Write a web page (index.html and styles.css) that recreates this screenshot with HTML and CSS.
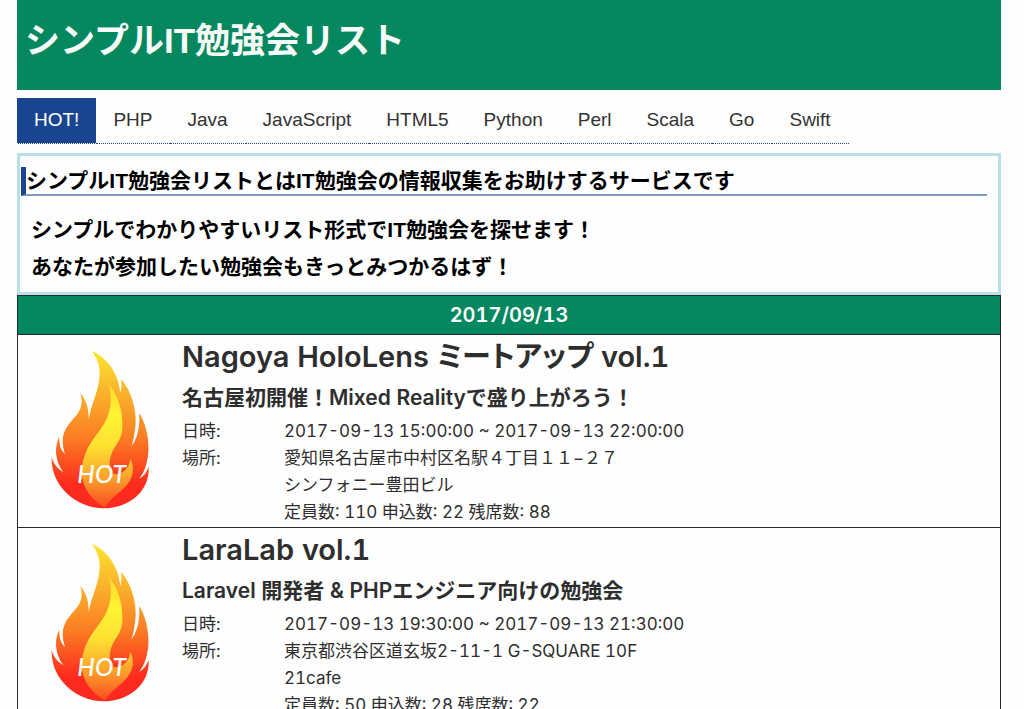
FILE: index.html
```html
<!DOCTYPE html>
<html lang="ja">
<head>
<meta charset="utf-8">
<meta name="viewport" content="width=device-width, initial-scale=1">
<title>シンプルIT勉強会リスト</title>
<link rel="stylesheet" href="styles.css">
</head>
<body>
<svg width="0" height="0" class="defs" aria-hidden="true">
  <defs>
    <linearGradient id="outer" x1="0" y1="0" x2="0" y2="1">
      <stop offset="0" stop-color="#fbe52f"/>
      <stop offset=".25" stop-color="#fab52b"/>
      <stop offset=".55" stop-color="#fb7d24"/>
      <stop offset=".85" stop-color="#fd2a1d"/>
      <stop offset="1" stop-color="#fb2a20"/>
    </linearGradient>
    <linearGradient id="inner" x1="0" y1="0" x2="0" y2="1">
      <stop offset="0" stop-color="#fcd530"/>
      <stop offset=".25" stop-color="#fff433"/>
      <stop offset=".5" stop-color="#fde132"/>
      <stop offset=".75" stop-color="#fba52c"/>
      <stop offset="1" stop-color="#fb4a20"/>
    </linearGradient>
    <symbol id="flame" viewBox="90 60 300 480">
      <path fill="url(#outer)" d="M215 63C262 82 296 132 301 189C305 177 305 162 303 146C338 187 353 252 345 298C342 320 339 336 334 350C352 325 361 290 357 249C382 285 391 350 382 388C378 413 370 430 358 446C372 438 381 425 386 410C390 478 333 534 250 535C167 534 92 466 95 382C101 401 112 417 130 426C108 398 100 355 118 320C117 344 122 361 135 372C113 304 150 281 172 252C186 234 188 211 181 189C199 210 207 237 206 269C214 220 238 180 239 133C240 104 230 82 215 63Z"/>
      <path fill="url(#inner)" d="M265 160C295 195 310 247 307 296C304 342 270 350 269 404C269 424 276 432 286 433C309 432 329 413 331 386C344 410 340 439 323 462C303 489 275 498 255 533C230 518 207 497 195 471C178 431 185 389 205 351C228 310 264 281 271 228C274 203 272 182 265 160Z"/>
      <text class="flame-text" x="172" y="459">HOT</text>
    </symbol>
  </defs>
</svg>

<div class="page">
  <header class="site-header">
    <h1 class="site-title">シンプルIT勉強会リスト</h1>
  </header>

  <nav class="tabs">
    <a class="tab tab-active" href="#hot" aria-current="page">HOT!</a>
    <a class="tab" href="#php">PHP</a>
    <a class="tab" href="#java">Java</a>
    <a class="tab" href="#javascript">JavaScript</a>
    <a class="tab" href="#html5">HTML5</a>
    <a class="tab" href="#python">Python</a>
    <a class="tab" href="#perl">Perl</a>
    <a class="tab" href="#scala">Scala</a>
    <a class="tab" href="#go">Go</a>
    <a class="tab" href="#swift">Swift</a>
  </nav>

  <section class="intro">
    <h2 class="intro-title">シンプルIT勉強会リストとはIT勉強会の情報収集をお助けするサービスです</h2>
    <p class="intro-text">シンプルでわかりやすいリスト形式でIT勉強会を探せます！<br>あなたが参加したい勉強会もきっとみつかるはず！</p>
  </section>

  <main class="events" id="hot">
    <h2 class="date">2017/09/13</h2>

    <article class="event">
      <svg class="flame" role="img" aria-label="HOT"><use href="#flame"/></svg>
      <div class="event-body">
        <h3 class="event-title">Nagoya HoloLens ミートアップ vol.1</h3>
        <p class="event-catch">名古屋初開催！Mixed Realityで盛り上がろう！</p>
        <dl class="details">
          <dt>日時:</dt>
          <dd>2017-09-13 15:00:00 ~ 2017-09-13 22:00:00</dd>
          <dt>場所:</dt>
          <dd>愛知県名古屋市中村区名駅４丁目１１−２７<br>シンフォニー豊田ビル</dd>
          <dd>定員数: 110 申込数: 22 残席数: 88</dd>
        </dl>
      </div>
    </article>

    <article class="event">
      <svg class="flame" role="img" aria-label="HOT"><use href="#flame"/></svg>
      <div class="event-body">
        <h3 class="event-title">LaraLab vol.1</h3>
        <p class="event-catch">Laravel 開発者 &amp; PHPエンジニア向けの勉強会</p>
        <dl class="details">
          <dt>日時:</dt>
          <dd>2017-09-13 19:30:00 ~ 2017-09-13 21:30:00</dd>
          <dt>場所:</dt>
          <dd>東京都渋谷区道玄坂2-11-1 G-SQUARE 10F<br>21cafe</dd>
          <dd>定員数: 50 申込数: 28 残席数: 22</dd>
        </dl>
      </div>
    </article>
  </main>
</div>
</body>
</html>
```
FILE: styles.css
```css
* {
  box-sizing: border-box;
}

body {
  margin: 0;
  background: #fefefe;
  color: #2e2e2e;
  font-family: Inter, "Noto Sans CJK JP", sans-serif;
  font-size: 17px;
  line-height: 27px;
  font-variant-numeric: tabular-nums;
}

h1,
h2,
h3,
p,
dl,
dd {
  margin: 0;
}

.defs {
  position: absolute;
}

.page {
  margin: 0 23px 0 17px;
}

.site-header {
  padding: 15px 8px 23px;
  background: #05875f;
}

.site-title {
  color: #f8fbf8;
  font-family: "Liberation Sans", "Noto Sans CJK JP", sans-serif;
  font-size: 35px;
  line-height: 52px;
}

.tabs {
  display: flex;
  flex-wrap: wrap;
  margin: 8px 0 9px;
}

.tab {
  padding: 8px 18px 9px 17px;
  border-bottom: 1px dotted #19448f;
  color: #333;
  font-family: "Liberation Sans", sans-serif;
  font-size: 19px;
  line-height: 28px;
  text-decoration: none;
}

.tab-active {
  padding-right: 17px;
  background: #19448f;
  border-bottom-color: #fff;
  color: #fff;
}

.intro {
  padding: 11px 11px 7px 1px;
  border: 3px solid #b8e0e6;
  color: #000;
  font-family: "Liberation Sans", "Noto Sans CJK JP", sans-serif;
  font-weight: 700;
}

.intro-title {
  border-left: 5px solid #19448f;
  border-bottom: 2px solid #7d99c4;
  font-size: 21px;
  line-height: 27px;
}

.intro-text {
  padding: 15px 10px 0;
  font-size: 21px;
  line-height: 37px;
}

.events {
  border: 1px solid #2a2a2a;
}

.date {
  background: #05875f;
  color: #fff;
  font-size: 20px;
  font-weight: 600;
  line-height: 38px;
  text-align: center;
}

.event {
  display: flex;
  gap: 32px;
  padding: 1px 8px 1px 32px;
  border-top: 1px solid #2a2a2a;
}

.flame {
  flex: none;
  width: 100px;
  height: 160px;
  margin-top: 14px;
}

.flame-text {
  fill: #fff;
  font-family: Lato, sans-serif;
  font-size: 74px;
  font-style: italic;
  font-weight: 500;
}

.event-body {
  flex: 1;
}

.event-title {
  font-size: 29px;
  font-weight: 600;
  line-height: 41px;
  font-feature-settings: "palt";
}

.event-catch {
  font-size: 21px;
  font-weight: 600;
  line-height: 41px;
}

.details {
  display: grid;
  grid-template-columns: 102px 1fr;
}

.details dd {
  grid-column: 2;
}
```
